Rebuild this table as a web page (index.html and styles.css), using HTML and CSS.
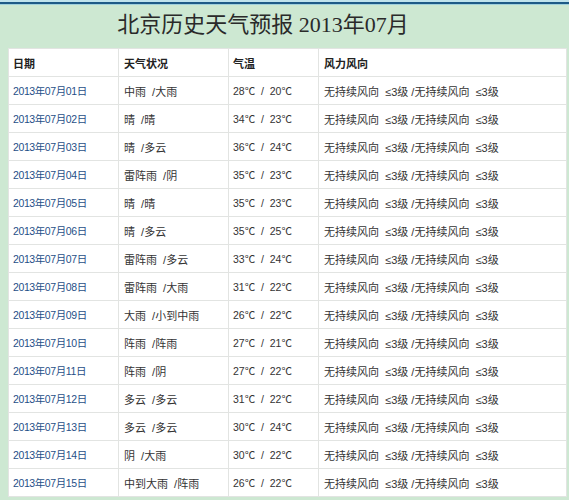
FILE: index.html
```html
<!DOCTYPE html>
<html lang="zh">
<head>
<meta charset="utf-8">
<link rel="stylesheet" href="styles.css">
</head>
<body>
<div class="topline"></div>
<div class="page">
  <h1 class="title">北京历史天气预报 2013年07月</h1>
  <table class="wx">
    <colgroup><col class="c1"><col class="c2"><col class="c3"><col class="c4"></colgroup>
    <thead>
      <tr><th>日期</th><th>天气状况</th><th>气温</th><th>风力风向</th></tr>
    </thead>
    <tbody>
      <tr><td class="date">2013年07月01日</td><td>中雨&nbsp; /大雨</td><td class="temp">28℃&nbsp; /&nbsp; 20℃</td><td>无持续风向&nbsp; ≤3级 /无持续风向&nbsp; ≤3级</td></tr>
      <tr><td class="date">2013年07月02日</td><td>晴&nbsp; /晴</td><td class="temp">34℃&nbsp; /&nbsp; 23℃</td><td>无持续风向&nbsp; ≤3级 /无持续风向&nbsp; ≤3级</td></tr>
      <tr><td class="date">2013年07月03日</td><td>晴&nbsp; /多云</td><td class="temp">36℃&nbsp; /&nbsp; 24℃</td><td>无持续风向&nbsp; ≤3级 /无持续风向&nbsp; ≤3级</td></tr>
      <tr><td class="date">2013年07月04日</td><td>雷阵雨&nbsp; /阴</td><td class="temp">35℃&nbsp; /&nbsp; 23℃</td><td>无持续风向&nbsp; ≤3级 /无持续风向&nbsp; ≤3级</td></tr>
      <tr><td class="date">2013年07月05日</td><td>晴&nbsp; /晴</td><td class="temp">35℃&nbsp; /&nbsp; 23℃</td><td>无持续风向&nbsp; ≤3级 /无持续风向&nbsp; ≤3级</td></tr>
      <tr><td class="date">2013年07月06日</td><td>晴&nbsp; /多云</td><td class="temp">35℃&nbsp; /&nbsp; 25℃</td><td>无持续风向&nbsp; ≤3级 /无持续风向&nbsp; ≤3级</td></tr>
      <tr><td class="date">2013年07月07日</td><td>雷阵雨&nbsp; /多云</td><td class="temp">33℃&nbsp; /&nbsp; 24℃</td><td>无持续风向&nbsp; ≤3级 /无持续风向&nbsp; ≤3级</td></tr>
      <tr><td class="date">2013年07月08日</td><td>雷阵雨&nbsp; /大雨</td><td class="temp">31℃&nbsp; /&nbsp; 22℃</td><td>无持续风向&nbsp; ≤3级 /无持续风向&nbsp; ≤3级</td></tr>
      <tr><td class="date">2013年07月09日</td><td>大雨&nbsp; /小到中雨</td><td class="temp">26℃&nbsp; /&nbsp; 22℃</td><td>无持续风向&nbsp; ≤3级 /无持续风向&nbsp; ≤3级</td></tr>
      <tr><td class="date">2013年07月10日</td><td>阵雨&nbsp; /阵雨</td><td class="temp">27℃&nbsp; /&nbsp; 21℃</td><td>无持续风向&nbsp; ≤3级 /无持续风向&nbsp; ≤3级</td></tr>
      <tr><td class="date">2013年07月11日</td><td>阵雨&nbsp; /阴</td><td class="temp">27℃&nbsp; /&nbsp; 22℃</td><td>无持续风向&nbsp; ≤3级 /无持续风向&nbsp; ≤3级</td></tr>
      <tr><td class="date">2013年07月12日</td><td>多云&nbsp; /多云</td><td class="temp">31℃&nbsp; /&nbsp; 22℃</td><td>无持续风向&nbsp; ≤3级 /无持续风向&nbsp; ≤3级</td></tr>
      <tr><td class="date">2013年07月13日</td><td>多云&nbsp; /多云</td><td class="temp">30℃&nbsp; /&nbsp; 24℃</td><td>无持续风向&nbsp; ≤3级 /无持续风向&nbsp; ≤3级</td></tr>
      <tr><td class="date">2013年07月14日</td><td>阴&nbsp; /大雨</td><td class="temp">30℃&nbsp; /&nbsp; 22℃</td><td>无持续风向&nbsp; ≤3级 /无持续风向&nbsp; ≤3级</td></tr>
      <tr><td class="date">2013年07月15日</td><td>中到大雨&nbsp; /阵雨</td><td class="temp">26℃&nbsp; /&nbsp; 22℃</td><td>无持续风向&nbsp; ≤3级 /无持续风向&nbsp; ≤3级</td></tr>
    </tbody>
  </table>
</div>
</body>
</html>
```

FILE: styles.css
```css
html, body {
  margin: 0;
  padding: 0;
  background: #cde8d2;
  overflow: hidden;
}
body {
  font-family: "Liberation Sans", "Noto Sans CJK SC", sans-serif;
  color: #333;
}
.topline {
  height: 6px;
  background: linear-gradient(#bfe3ec 0, #bfe3ec 2px, #1d5a86 2px, #1d5a86 4px, #9fd0dc 4px, #9fd0dc 5px, #cde8d2 5px);
}
.page {
  padding: 0 3px 0 8px;
}
.title {
  margin: 0;
  height: 42px;
  line-height: 38px;
  padding-right: 48px;
  text-align: center;
  font-family: "Liberation Serif", "Noto Sans CJK SC", serif;
  font-weight: normal;
  font-size: 22px;
  color: #2a2a2a;
}
.wx {
  width: 558px;
  border-collapse: collapse;
  background: #fff;
  table-layout: fixed;
  font-size: 11px;
}
.c1 { width: 110px; }
.c2 { width: 110px; }
.c3 { width: 90px; }
.c4 { width: 248px; }
.wx th, .wx td {
  border: 1px solid #e2e4e2;
  height: 27px;
  padding: 0 0 0 4px;
  text-align: left;
  white-space: nowrap;
  overflow: hidden;
}
.wx th {
  font-weight: bold;
  color: #222;
  font-size: 11px;
}
.wx td { color: #333; }
.wx td:nth-child(2), .wx th:nth-child(2),
.wx td:nth-child(4), .wx th:nth-child(4) { padding-left: 5px; }
.date {
  color: #1f4f88 !important;
  font-size: 10.5px;
  letter-spacing: -0.4px;
}
.temp { font-size: 10.5px; }
```
